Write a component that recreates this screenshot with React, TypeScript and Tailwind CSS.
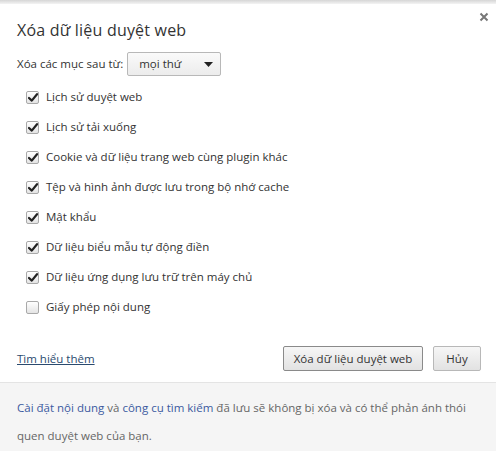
import React from 'react';

const items = [
  { label: 'Lịch sử duyệt web', checked: true },
  { label: 'Lịch sử tải xuống', checked: true },
  { label: 'Cookie và dữ liệu trang web cùng plugin khác', checked: true },
  { label: 'Tệp và hình ảnh được lưu trong bộ nhớ cache', checked: true },
  { label: 'Mật khẩu', checked: true },
  { label: 'Dữ liệu biểu mẫu tự động điền', checked: true },
  { label: 'Dữ liệu ứng dụng lưu trữ trên máy chủ', checked: true },
  { label: 'Giấy phép nội dung', checked: false },
];

const Checkbox = ({ checked }: { checked: boolean }) => (
  <div className="w-[13px] h-[13px] rounded-[2px] border border-[#a9a9a9] bg-gradient-to-b from-[#ffffff] to-[#e4e4e4] flex items-center justify-center">
    {checked && (
      <svg width="10" height="9" viewBox="0 0 10 9">
        <path d="M1 5 L3.8 7.6 L9 1.2" fill="none" stroke="#222" strokeWidth="2.2" strokeLinecap="round" strokeLinejoin="round" />
      </svg>
    )}
  </div>
);

const App = () => {
  return (
    <div className="w-[496px] h-[451px] bg-white flex flex-col text-[#333] font-['Open_Sans',sans-serif] text-[11.5px]">
      <div className="h-[4px] bg-gradient-to-b from-[#d6d6d6] to-[#f4f4f4]" />
      <div className="flex-1 flex flex-col px-[17px]">
        <div className="flex items-start justify-between pt-[16px]">
          <h1 className="text-[16px] leading-[20px] tracking-[0.2px] text-[#333]">Xóa dữ liệu duyệt web</h1>
          <svg width="10" height="10" viewBox="0 0 10 10" className="-mt-[8px] -mr-[10px]">
            <path d="M1.5 1.5 L8.5 8.5 M8.5 1.5 L1.5 8.5" stroke="#777" strokeWidth="2" />
          </svg>
        </div>
        <div className="flex items-center mt-[12px]">
          <span>Xóa các mục sau từ:</span>
          <div className="ml-[4px] w-[94px] h-[24px] border border-[#b8b8b8] rounded-[2px] bg-gradient-to-b from-[#fafafa] to-[#ececec] flex items-center justify-between pl-[11px] pr-[7px]">
            <span>mọi thứ</span>
            <svg width="9" height="5" viewBox="0 0 9 5">
              <path d="M0 0 L9 0 L4.5 5 Z" fill="#222" />
            </svg>
          </div>
        </div>
        <div className="flex flex-col mt-[6px] pl-[9px]">
          {items.map((it) => (
            <div key={it.label} className="flex items-center h-[30px] gap-[7px]">
              <Checkbox checked={it.checked} />
              <span>{it.label}</span>
            </div>
          ))}
        </div>
        <div className="flex items-center justify-between mt-[24px]">
          <a href="#" className="underline text-[#2a4a6e]">Tìm hiểu thêm</a>
          <div className="flex gap-[10px] -mr-[2px]">
            <button className="h-[25px] w-[140px] whitespace-nowrap border border-[#8a8a8a] rounded-[2px] bg-gradient-to-b from-[#f6f6f6] to-[#e2e2e2] text-[#333]">Xóa dữ liệu duyệt web</button>
            <button className="h-[25px] w-[48px] border border-[#b8b8b8] rounded-[2px] bg-gradient-to-b from-[#f6f6f6] to-[#e2e2e2] text-[#333]">Hủy</button>
          </div>
        </div>
      </div>
      <div className="h-[69px] border-t border-[#e4e4e4] bg-[#f5f5f5] pl-[17px] pr-[22px] pt-[11px] text-[11.5px] leading-[28px] text-[#666]">
        <a href="#" className="text-[#3b5aa0]">Cài đặt nội dung</a> và <a href="#" className="text-[#3b5aa0]">công cụ tìm kiếm</a> đã lưu sẽ không bị xóa và có thể phản ánh thói quen duyệt web của bạn.
      </div>
    </div>
  );
};

export default App;
